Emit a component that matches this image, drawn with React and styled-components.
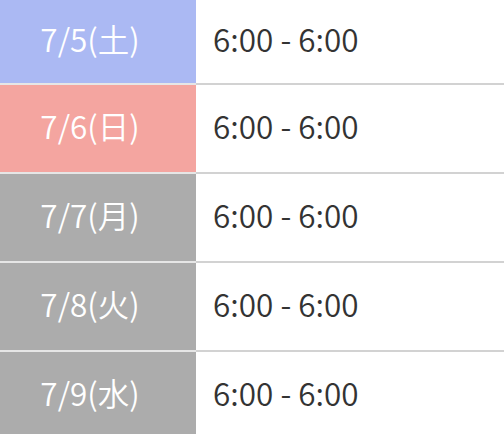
import React from "react";
import styled, { createGlobalStyle } from "styled-components";

const GlobalStyle = createGlobalStyle`
  html, body {
    margin: 0;
    padding: 0;
    background: #ffffff;
    overflow: hidden;
  }
  body {
    font-family: "Noto Sans CJK JP", "Noto Sans", sans-serif;
  }
`;

const schedule = [
  { date: "7/5(土)", time: "6:00 - 6:00", kind: "sat" },
  { date: "7/6(日)", time: "6:00 - 6:00", kind: "sun" },
  { date: "7/7(月)", time: "6:00 - 6:00", kind: "weekday" },
  { date: "7/8(火)", time: "6:00 - 6:00", kind: "weekday" },
  { date: "7/9(水)", time: "6:00 - 6:00", kind: "weekday" },
];

const dayColors = {
  sat: "#abb9f3",
  sun: "#f4a5a0",
  weekday: "#acacac",
};

export default function App() {
  return (
    <>
      <GlobalStyle />
      <Table>
        {schedule.map((row, i) => (
          <Row key={row.date} $first={i === 0}>
            <DateCell $kind={row.kind}>{row.date}</DateCell>
            <TimeCell>{row.time}</TimeCell>
          </Row>
        ))}
      </Table>
    </>
  );
}

const Table = styled.div`
  width: 504px;
  display: flex;
  flex-direction: column;
`;

const Row = styled.div`
  display: grid;
  grid-template-columns: 196px 1fr;
  height: ${(p) => (p.$first ? "83px" : "87px")};
  border-bottom: 2px solid #d2d2d2;
  font-size: 31.5px;
  font-weight: 350;
  line-height: 1;
`;

const DateCell = styled.div`
  display: flex;
  align-items: center;
  justify-content: center;
  padding: 0 16px 6px 0;
  background: ${(p) => dayColors[p.$kind]};
  color: #ffffff;
  box-shadow: 0 2px 0 rgba(255, 255, 255, 0.45);
`;

const TimeCell = styled.div`
  display: flex;
  align-items: center;
  padding: 0 0 6px 16px;
  color: #333333;
  border-left: 1px solid #ffffff;
`;
